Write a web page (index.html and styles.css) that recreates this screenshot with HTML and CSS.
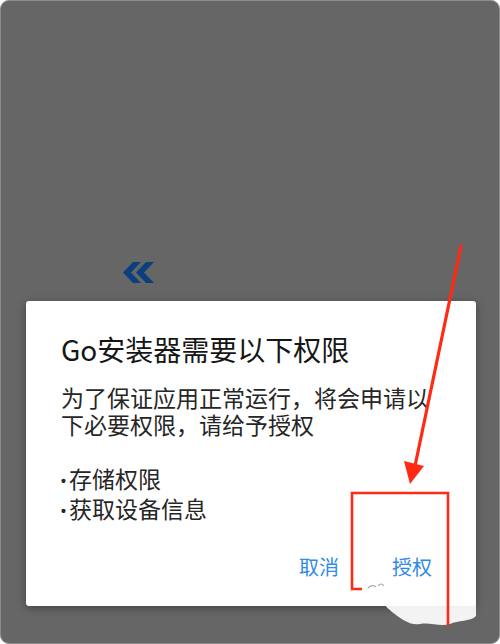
FILE: index.html
```html
<!DOCTYPE html>
<html lang="zh-CN">
<head>
<meta charset="utf-8">
<link rel="stylesheet" href="styles.css">
</head>
<body>
<div class="screen">
  <div class="backdrop-content">
    <svg class="chevron" width="31" height="22" viewBox="0 0 31 22">
      <polygon points="0,10.5 10,0 18,0 8,10.5 18,21 10,21" fill="#0c3f7e"/>
      <polygon points="13,10.5 23,0 31,0 21,10.5 31,21 23,21" fill="#0c3f7e"/>
    </svg>
  </div>
  <div class="dialog">
    <h1 class="title">Go安装器需要以下权限</h1>
    <p class="message">为了保证应用正常运行，将会申请以下必要权限，请给予授权</p>
    <ul class="perms">
      <li><span class="dot">•</span>存储权限</li>
      <li><span class="dot">•</span>获取设备信息</li>
    </ul>
    <div class="actions">
      <span class="btn">取消</span>
      <span class="btn">授权</span>
    </div>
  </div>
  <svg class="annot" width="500" height="644" viewBox="0 0 500 644">
    <path d="M385,602 C400,598 440,600 476,598 L476,616 C470,622 458,620 450,624 C440,627 430,622 420,624 C410,626 400,618 392,612 C388,608 384,606 385,602 Z" fill="#fff" opacity="0.92"/>
    <path d="M368,588 q4,-4 8,-1 M378,586 q3,-4 6,0" stroke="#aaa" stroke-width="1.2" fill="none"/>
    <line x1="461" y1="246" x2="415" y2="466" stroke="#ff2a14" stroke-width="3.2" stroke-linecap="round"/>
    <polygon points="404,461 424,466 410,484" fill="#ff2a14"/>
    <path d="M362,589 L352,589 L352,493 L448,493 L448,626" stroke="#ff2a14" stroke-width="2.6" fill="none"/>
  </svg>
</div>
</body>
</html>
```
FILE: styles.css
```css
html, body {
  margin: 0;
  padding: 0;
  background: #ffffff;
}
body {
  font-family: "Noto Sans CJK SC", "Noto Sans", sans-serif;
}
.screen {
  position: relative;
  width: 500px;
  height: 644px;
  box-sizing: border-box;
  background: #666666;
  border: 1px solid #8c8c8c;
  border-radius: 9px;
  overflow: hidden;
}
.backdrop-content {
  padding: 261px 0 0 122px;
  height: 22px;
}
.chevron {
  display: block;
}
.dialog {
  margin: 17px 0 0 25px;
  width: 450px;
  box-sizing: border-box;
  background: #ffffff;
  border-radius: 3px;
  box-shadow: 0 2px 8px rgba(0, 0, 0, 0.35);
  padding: 31px 35px 27px 35px;
}
.title {
  margin: 0;
  font-size: 28px;
  line-height: 34px;
  font-weight: 400;
  color: #161616;
}
.message {
  margin: 18px 0 0 0;
  font-size: 23px;
  line-height: 27px;
  color: #262626;
}
.perms {
  list-style: none;
  margin: 27px 0 0 0;
  padding: 0;
  font-size: 23px;
  line-height: 27px;
  color: #262626;
}
.dot {
  font-family: "Liberation Sans", sans-serif;
  font-weight: 700;
  font-size: 14px;
  display: inline-block;
  width: 8px;
  vertical-align: 2px;
}
.actions {
  margin-top: 30px;
  display: flex;
  justify-content: flex-end;
  gap: 53px;
  padding-right: 9px;
}
.btn {
  font-size: 20px;
  line-height: 24px;
  color: #2f8be6;
}
.annot {
  position: absolute;
  left: -1px;
  top: -1px;
  pointer-events: none;
}
```
